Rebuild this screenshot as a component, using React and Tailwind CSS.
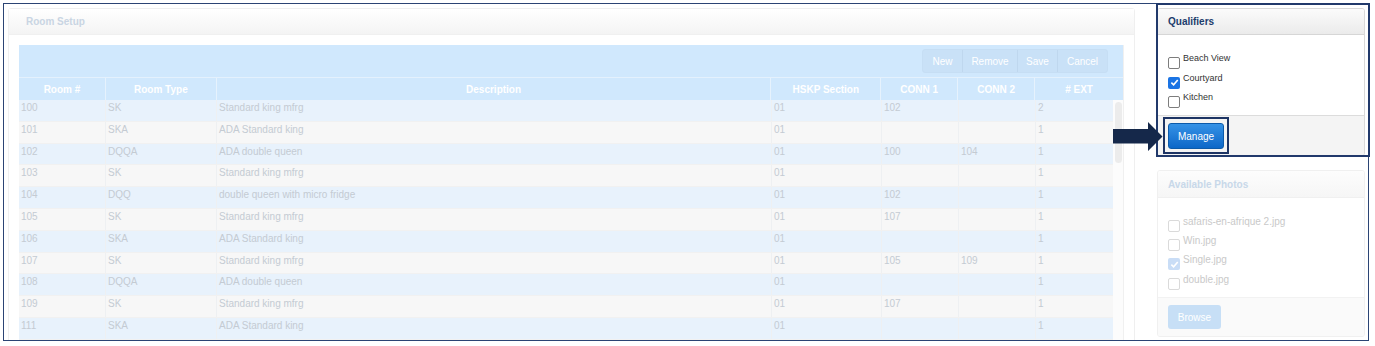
import React from "react";

const font = { fontFamily: '"Liberation Sans", Arial, sans-serif' };

// column widths of the room grid
const cols = [
  { label: "Room #", w: "w-[87px]" },
  { label: "Room Type", w: "w-[111px]" },
  { label: "Description", w: "w-[555px]" },
  { label: "HSKP Section", w: "w-[110px]" },
  { label: "CONN 1", w: "w-[77px]" },
  { label: "CONN 2", w: "w-[77px]" },
  { label: "# EXT", w: "w-[77px]" },
];

const rooms = [
  ["100", "SK", "Standard king mfrg", "01", "102", "", "2"],
  ["101", "SKA", "ADA Standard king", "01", "", "", "1"],
  ["102", "DQQA", "ADA double queen", "01", "100", "104", "1"],
  ["103", "SK", "Standard king mfrg", "01", "", "", "1"],
  ["104", "DQQ", "double queen with micro fridge", "01", "102", "", "1"],
  ["105", "SK", "Standard king mfrg", "01", "107", "", "1"],
  ["106", "SKA", "ADA Standard king", "01", "", "", "1"],
  ["107", "SK", "Standard king mfrg", "01", "105", "109", "1"],
  ["108", "DQQA", "ADA double queen", "01", "", "", "1"],
  ["109", "SK", "Standard king mfrg", "01", "107", "", "1"],
  ["111", "SKA", "ADA Standard king", "01", "", "", "1"],
];

const Check = ({ on, faded }) => {
  if (on) {
    return (
      <span
        className={`flex items-center justify-center w-[12px] h-[12px] rounded-[2px] shrink-0 ${
          faded ? "bg-[#c9ddf6]" : "bg-[#1b74e4]"
        }`}
      >
        <svg width="9" height="9" viewBox="0 0 10 10">
          <path d="M1.5 5.2 L4 7.6 L8.6 2.2" fill="none" stroke="#fff" strokeWidth="1.8" />
        </svg>
      </span>
    );
  }
  return (
    <span
      className={`block w-[12px] h-[12px] rounded-[2px] shrink-0 bg-white border ${
        faded ? "border-[#dadada]" : "border-[#7d7d7d]"
      }`}
    />
  );
};

const RoomSetup = () => (
  <div className="ml-[4px] mt-[4px] w-[1127px] h-[360px] shrink-0 border border-[#efefef] rounded-[3px] bg-white">
    <div className="h-[26px] flex items-center pl-[17px] bg-linear-to-b from-[#ffffff] to-[#f4f4f4] border-b border-[#f0f0f0]">
      <span className="text-[10px] font-bold text-[#c9d5e3]">Room Setup</span>
    </div>

    <div className="pt-[10px] pl-[10px]">
      <div className="w-[1105px] border-r border-[#f0f0f0]">
        {/* toolbar */}
        <div className="h-[32px] bg-[#d0e8fd] flex items-center justify-end pr-[15px]">
          <div className="flex h-[24px] rounded-[3px] border border-[#c6def4] bg-[#c9e1f7] text-[10px] text-white">
            <span className="w-[40px] flex items-center justify-center border-r border-[#bfd7ee]">New</span>
            <span className="w-[55px] flex items-center justify-center border-r border-[#bfd7ee]">Remove</span>
            <span className="w-[40px] flex items-center justify-center border-r border-[#bfd7ee]">Save</span>
            <span className="w-[49px] flex items-center justify-center">Cancel</span>
          </div>
        </div>

        {/* header */}
        <div className="h-[23px] flex bg-[#d0e8fd] border-t border-[#e4f1fd] text-[10px] font-bold text-white">
          {cols.map((c, i) => (
            <div
              key={c.label}
              className={`${i === 6 ? "w-[88px]" : c.w} flex items-center justify-center ${
                i < 6 ? "border-r border-[#e6f2fd]" : ""
              }`}
            >
              {c.label}
            </div>
          ))}
        </div>

        {/* body */}
        <div className="flex">
          <div className="w-[1094px]">
            {rooms.map((r, ri) => (
              <div
                key={r[0]}
                className={`h-[21.8px] flex border-b border-[#f1f1f1] text-[10px] leading-[12px] text-[#c4cbd3] ${
                  ri % 2 === 0 ? "bg-[#e8f2fc]" : "bg-[#f7f7f7]"
                }`}
              >
                {r.map((v, ci) => (
                  <div
                    key={ci}
                    className={`${cols[ci].w} pl-[2px] pt-[2px] ${ci < 6 ? "border-r border-[#eef0f2]" : ""}`}
                  >
                    {v}
                  </div>
                ))}
              </div>
            ))}
          </div>
          <div className="w-[11px] bg-[#fcfcfc] pt-[2px] pl-[2px]">
            <div className="w-[7px] h-[61px] rounded-full bg-[#ececec]" />
          </div>
        </div>
      </div>
    </div>
  </div>
);

const Qualifiers = () => (
  <div className="w-[208px] border border-[#d9d9d9] rounded-[3px] bg-white overflow-hidden">
    <div className="h-[26px] flex items-center pl-[10px] bg-linear-to-b from-[#fbfbfb] to-[#ebebeb] border-b border-[#d6d6d6]">
      <span className="text-[10px] font-bold text-[#1d3d6c]">Qualifiers</span>
    </div>
    <div className="h-[80px] pt-[17px] pl-[10px]">
      {[
        ["Beach View", false],
        ["Courtyard", true],
        ["Kitchen", false],
      ].map(([label, on]) => (
        <div key={label} className="h-[19.5px] flex items-start gap-[3px]">
          <span className="mt-[5px]">
            <Check on={on} />
          </span>
          <span className="text-[9px] leading-[12px] text-[#333]">{label}</span>
        </div>
      ))}
    </div>
    <div className="h-[40px] bg-[#f4f4f4] border-t border-[#dcdcdc] pt-[7px] pl-[10px]">
      <div className="w-[56px] h-[26px] rounded-[3px] border border-[#0c5aaa] bg-linear-to-b from-[#3592e6] to-[#0b67c8] flex items-center justify-center text-[10px] text-white">
        Manage
      </div>
    </div>
  </div>
);

const Photos = () => (
  <div className="mt-[14px] w-[208px] h-[167px] border border-[#f0f0f0] rounded-[3px] bg-white overflow-hidden">
    <div className="h-[27px] flex items-center pl-[10px] bg-linear-to-b from-[#fdfdfd] to-[#f6f6f6] border-b border-[#f0f0f0]">
      <span className="text-[10px] font-bold text-[#c8d8e9]">Available Photos</span>
    </div>
    <div className="h-[99px] pt-[18px] pl-[10px]">
      {[
        ["safaris-en-afrique 2.jpg", false],
        ["Win.jpg", false],
        ["Single.jpg", true],
        ["double.jpg", false],
      ].map(([label, on]) => (
        <div key={label} className="h-[19.2px] flex items-start gap-[3px]">
          <span className="mt-[4px]">
            <Check on={on} faded />
          </span>
          <span className="text-[10px] leading-[12px] text-[#c9c9c9]">{label}</span>
        </div>
      ))}
    </div>
    <div className="h-[40px] bg-[#fafafa] border-t border-[#f2f2f2] pt-[7px] pl-[10px]">
      <div className="w-[53px] h-[24px] rounded-[3px] bg-[#c7dff6] flex items-center justify-center text-[10px] text-white">
        Browse
      </div>
    </div>
  </div>
);

export default function App() {
  return (
    <div className="relative w-[1375px] h-[346px] bg-white overflow-hidden pt-[3px] pl-[3px]" style={font}>
      <div className="w-[1366px] h-[338px] border border-[#2b4474] overflow-hidden flex">
        <RoomSetup />
        <div className="ml-[22px] mt-[4px] flex flex-col">
          <Qualifiers />
          <Photos />
        </div>
      </div>

      {/* callout highlights */}
      <div className="absolute left-[1156px] top-[3px] w-[214px] h-[154px] border-2 border-[#21396b] pointer-events-none" />
      <div className="absolute left-[1163px] top-[117px] w-[66px] h-[37px] border-2 border-[#1d3464] pointer-events-none" />
      <svg className="absolute left-[1113px] top-[122px]" width="50" height="30" viewBox="0 0 50 30">
        <polygon points="0,7 35,7 35,0 49.5,14.5 35,29 35,21.5 0,21.5" fill="#15284a" />
      </svg>
    </div>
  );
}
